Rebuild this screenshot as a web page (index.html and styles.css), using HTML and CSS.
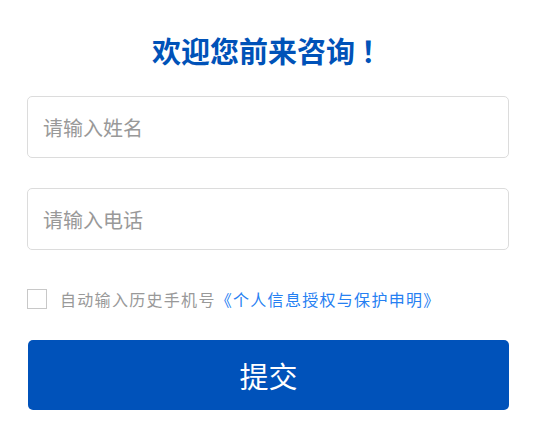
FILE: index.html
```html
<!DOCTYPE html>
<html lang="zh-CN">
<head>
    <meta charset="UTF-8">
    <meta name="viewport" content="width=device-width, initial-scale=1.0">
    <title>在线咨询</title>
    <link rel="stylesheet" href="styles.css">
</head>
<body>
    <div class="container">
        <h1 class="title">欢迎您前来咨询<span class="mark">！</span></h1>
        <form class="form">
            <input type="text" class="field" placeholder="请输入姓名">
            <input type="tel" class="field" placeholder="请输入电话">
            <label class="agree">
                <span class="box"></span>
                <span class="agree-text">自动输入历史手机号<a href="#" class="link">《个人信息授权与保护申明》</a></span>
            </label>
            <button type="button" class="submit">提交</button>
        </form>
    </div>
</body>
</html>
```

FILE: styles.css
```css
body {
    margin: 0;
    background: #fff;
    font-family: "Noto Sans CJK SC", "Noto Sans", sans-serif;
}
.container {
    width: 482px;
    margin: 0 0 0 27px;
    padding-top: 30px;
}
.title {
    margin: 0 0 26px;
    padding-left: 6px;
    font-size: 29px;
    line-height: 40px;
    font-weight: bold;
    text-align: center;
    color: #0052b8;
}
.mark {
    margin-left: 6px;
}
.form {
    display: flex;
    flex-direction: column;
}
.field {
    box-sizing: border-box;
    height: 62px;
    margin-bottom: 30px;
    padding: 0 15px;
    border: 1px solid #dcdcdc;
    border-radius: 5px;
    font-family: inherit;
    font-size: 20px;
    color: #333;
    outline: none;
}
.field:last-of-type {
    margin-bottom: 39px;
}
.field::placeholder {
    color: #999;
}
.agree {
    display: flex;
    align-items: center;
    height: 20px;
    font-size: 16px;
    color: #999;
}
.box {
    box-sizing: border-box;
    width: 20px;
    height: 20px;
    border: 1px solid #c8c8c8;
    margin-right: 13px;
    flex-shrink: 0;
}
.agree-text {
    letter-spacing: 1.3px;
    white-space: nowrap;
}
.link {
    color: #2680f2;
    text-decoration: none;
}
.submit {
    margin-top: 31px;
    margin-left: 1px;
    height: 70px;
    border: none;
    border-radius: 5px;
    background: #0052ba;
    color: #fff;
    font-family: inherit;
    font-size: 29px;
    cursor: pointer;
}
```
